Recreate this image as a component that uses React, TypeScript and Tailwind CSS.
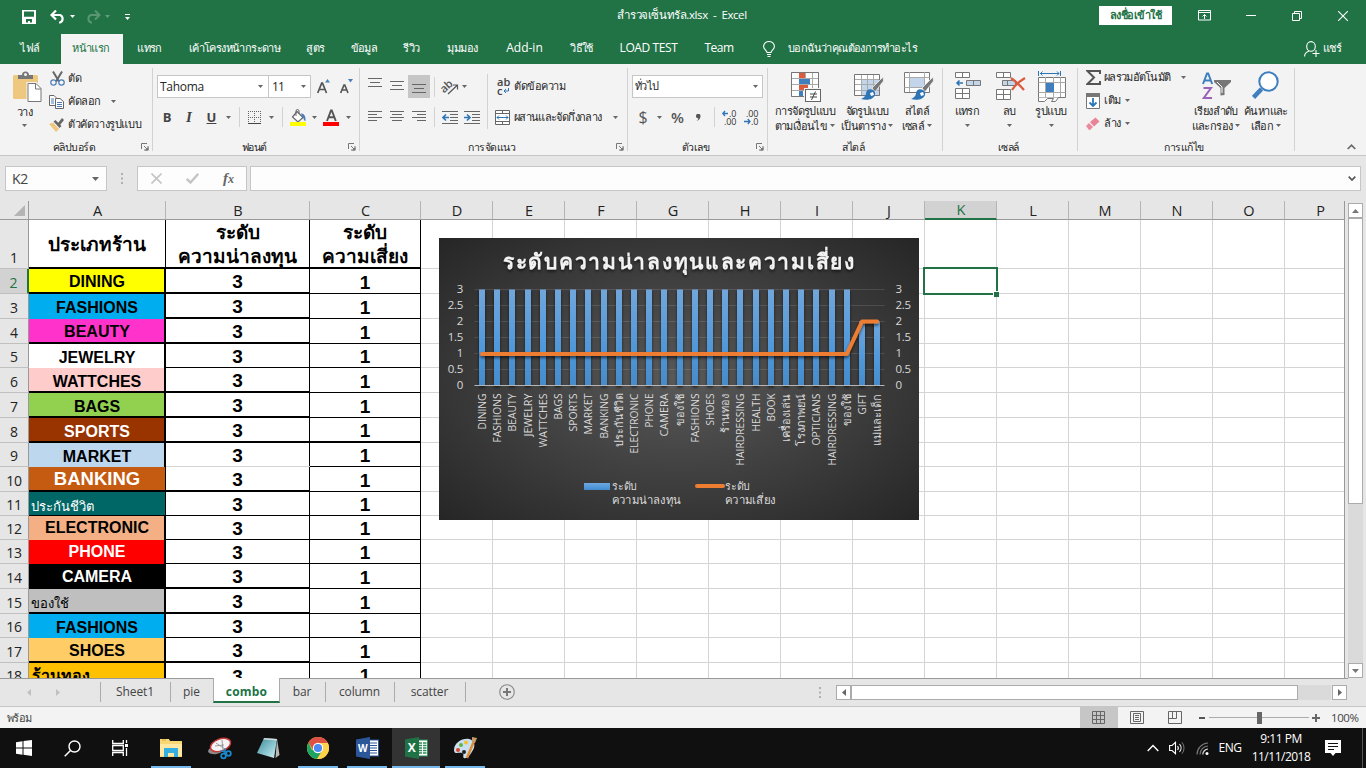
import React from "react";

function Caret({ className = "", color = "#666" }: { className?: string; color?: string }) {
  return (
    <svg className={`h-[3px] w-[5px] shrink-0 ${className}`} viewBox="0 0 5 3">
      <path d="M0 0h5L2.5 3z" fill={color} />
    </svg>
  );
}

function Launcher() {
  return (
    <svg className="mr-[4px] h-[8px] w-[8px]" viewBox="0 0 8 8">
      <path d="M.5 6V.5H6M3 3l3 3M7 3v4H3" fill="none" stroke="#777" />
      <path d="M7.5 4v3.5H4z" fill="#777" />
    </svg>
  );
}

/* ---------- title bar ---------- */

function TitleBar() {
  return (
    <div className="flex h-[34px] items-start text-white">
      <div className="flex h-[33px] w-[480px] items-center">
        <svg className="ml-[22px] h-[14px] w-[14px]" viewBox="0 0 14 14">
          <path d="M0 0h14v14H0zM2 1.6v5.2h10V1.6zM4 9v3.5h2V11h2v1.5h2V9z" fill="#fff" fillRule="evenodd" />
        </svg>
        <svg className="ml-[14px] h-[14px] w-[16px]" viewBox="0 0 16 14">
          <path d="M2 5h8a4 4 0 0 1 0 7.500h-1" fill="none" stroke="#fff" strokeWidth="2.200" />
          <path d="M6 .5L1.500 5L6 9.500" fill="none" stroke="#fff" strokeWidth="2.200" />
        </svg>
        <Caret className="ml-[4px]" color="#fff" />
        <svg className="ml-[10px] h-[14px] w-[16px] opacity-25" viewBox="0 0 16 14">
          <path d="M14 5H6a4 4 0 0 0 0 7.500h1" fill="none" stroke="#fff" strokeWidth="2" />
          <path d="M10 .5L14.500 5L10 9.500" fill="none" stroke="#fff" strokeWidth="2" />
        </svg>
        <Caret className="ml-[4px] opacity-30" color="#fff" />
        <svg className="ml-[15px] h-[6px] w-[5px]" viewBox="0 0 5 6">
          <path d="M0 0h5v1H0zM0 3h5L2.500 6z" fill="#fff" />
        </svg>
      </div>
      <div className="flex h-[30px] w-[404px] items-center justify-center text-[11.5px] tracking-[-0.4px] whitespace-pre">สำรวจเซ็นทรัล.xlsx  -  Excel</div>
      <div className="flex h-[31px] grow items-center">
        <div className="ml-[215px] flex h-[19px] w-[73px] items-center justify-center bg-white text-[11px] font-semibold tracking-[-0.5px] text-[#217346]">ลงชื่อเข้าใช้</div>
        <svg className="ml-[26px] h-[11px] w-[13px]" viewBox="0 0 13 11">
          <path d="M.5.5h12v9.500H.5zM.5 2.500h12M6.500 9V4.500M4.500 6.500l2-2l2 2" fill="none" stroke="#fff" />
        </svg>
        <div className="ml-[35px] h-px w-[10px] bg-white" />
        <svg className="ml-[36px] h-[10px] w-[10px]" viewBox="0 0 10 10">
          <path d="M.5 2.500h7v7h-7zM2.500 2.500v-2h7v7h-2" fill="none" stroke="#fff" />
        </svg>
        <svg className="ml-[36px] h-[10px] w-[10px]" viewBox="0 0 10 10">
          <path d="M0 0L10 10M10 0L0 10" fill="none" stroke="#fff" strokeWidth="1.100" />
        </svg>
      </div>
    </div>
  );
}

function Tab({ className, children }: { className: string; children: React.ReactNode }) {
  return <div className={`flex h-[28px] shrink-0 items-center justify-center whitespace-nowrap ${className}`}>{children}</div>;
}

function TabRow() {
  return (
    <div className="flex h-[30px] text-[11px] tracking-[-0.6px] text-white">
      <Tab className="w-[60px]">ไฟล์</Tab>
      <div className="ml-px flex h-[30px] w-[62px] items-center justify-center bg-[#f3f3f3] pr-[2px] pb-[2px] text-[#217346]">หน้าแรก</div>
      <Tab className="w-[53px]">แทรก</Tab>
      <Tab className="w-[117px]">เค้าโครงหน้ากระดาษ</Tab>
      <Tab className="w-[45px]">สูตร</Tab>
      <Tab className="w-[52px]">ข้อมูล</Tab>
      <Tab className="w-[43px]">รีวิว</Tab>
      <Tab className="w-[59px]">มุมมอง</Tab>
      <Tab className="w-[65px] text-[12px] tracking-normal">Add-in</Tab>
      <Tab className="w-[49px]">วิธีใช้</Tab>
      <Tab className="w-[85px] text-[12px] tracking-[-0.4px]">LOAD TEST</Tab>
      <Tab className="w-[56px] text-[12px] tracking-[-0.5px]">Team</Tab>
      <svg className="mt-[7px] ml-[16px] h-[16px] w-[12px]" viewBox="0 0 12 16">
        <path d="M4 11.500c0-2-3.400-3-3.400-6a5.400 5 0 0 1 10.800 0c0 3-3.400 4-3.400 6zM4 13.500h4M4.500 15.500h3" fill="none" stroke="#fff" strokeWidth="1.100" />
      </svg>
      <Tab className="ml-[12px] w-[131px]">บอกฉันว่าคุณต้องการทำอะไร</Tab>
      <svg className="mt-[7px] ml-[386px] h-[16px] w-[16px]" viewBox="0 0 16 16">
        <path d="M7 .6a4.300 4.800 0 0 1 0 9.600a4.300 4.800 0 0 1 0-9.600M.6 15.500c0-3 1.500-4.500 4-5.300M8.500 12.500h7M12 9v7" fill="none" stroke="#fff" strokeWidth="1.100" />
      </svg>
      <Tab className="ml-[3px] w-[18px]">แชร์</Tab>
    </div>
  );
}

/* ---------- ribbon ---------- */

function Group({ className, label, launcher, children }: { className: string; label: string; launcher?: boolean; children: React.ReactNode }) {
  return (
    <div className={`flex h-[91px] shrink-0 ${className}`}>
      <div className="flex min-w-0 grow flex-col">
        <div className="h-[75px]">{children}</div>
        <div className="flex h-[16px] items-center">
          <div className="w-[10px]" />
          <div className="grow text-center text-[10.5px] leading-none tracking-[-0.5px] whitespace-nowrap">{label}</div>
          <div className="w-[14px] pl-[3px]">{launcher && <Launcher />}</div>
        </div>
      </div>
      <div className="mt-[4px] h-[83px] w-px shrink-0 bg-[#d2d2d2]" />
    </div>
  );
}

function Lines({ rows, className }: { rows: [number, number][]; className: string }) {
  return (
    <svg className={`h-[14px] w-[14px] shrink-0 ${className}`} viewBox="0 0 14 14">
      {rows.map(([x, w], i) => (
        <rect key={i} x={x} y={i * (rows.length === 3 ? 4 : 3) + 1} width={w} height="1" fill="#666" />
      ))}
    </svg>
  );
}

function ClipboardGroup() {
  return (
    <Group className="w-[153px]" label="คลิปบอร์ด" launcher>
      <div className="flex h-full">
        <div className="flex w-[49px] flex-col items-center">
          <svg className="mt-[7px] ml-[5px] h-[32px] w-[29px]" viewBox="0 0 29 32">
            <rect x="0" y="4" width="25" height="24" rx="1.500" fill="#edc87e" />
            <path d="M5 8V4h4a3.500 3.500 0 0 1 7 0h4v4z" fill="#777" />
            <circle cx="12.500" cy="3.500" r="1.500" fill="#f3f3f3" />
            <path d="M13.500 11h10l6 6v15h-16z" fill="#f3f3f3" />
            <path d="M15 12.500h8l5 5V30.500H15z" fill="#fff" stroke="#777" />
            <path d="M22.500 12.500v5.500h5.500" fill="none" stroke="#777" />
          </svg>
          <div className="mt-[2px] text-[11px] leading-[14px] tracking-[-0.4px]">วาง</div>
          <Caret className="mt-[5px]" />
        </div>
        <div className="flex flex-col text-[11px] tracking-[-0.4px] whitespace-nowrap">
          <div className="mt-[3px] flex h-[23px] items-center">
            <svg className="mr-[3px] ml-[1px] h-[15px] w-[15px]" viewBox="0 0 15 15">
              <path d="M3 .5l6 10M12 .5l-6 10" stroke="#666" strokeWidth="2" />
              <circle cx="3.500" cy="11.500" r="2.700" fill="none" stroke="#4a7ebb" strokeWidth="1.200" />
              <circle cx="11.500" cy="11.500" r="2.700" fill="none" stroke="#4a7ebb" strokeWidth="1.200" />
            </svg>
            ตัด
          </div>
          <div className="flex h-[23px] items-center">
            <svg className="mr-[4px] h-[14px] w-[15px]" viewBox="0 0 15 14">
              <path d="M.5.500H5l3 3v7H.5z" fill="#fff" stroke="#666" />
              <path d="M2 4h3M2 6h3M2 8h3" stroke="#4a7ebb" />
              <path d="M6.500 3.500H11l3.500 3v7h-8z" fill="#fff" stroke="#666" />
              <path d="M8 7.500h5M8 9.500h5M8 11.500h5" stroke="#4a7ebb" />
            </svg>
            คัดลอก
            <Caret className="ml-[10px]" />
          </div>
          <div className="flex h-[23px] items-center">
            <svg className="mr-[4px] h-[14px] w-[15px]" viewBox="0 0 15 14">
              <path d="M0 6l4-1.500L10 11l-3 3z" fill="#edc87e" />
              <path d="M4.500 3.500l2-1.500l6 6l-2 2zM9 5l4-5l2 2l-4 5z" fill="#666" />
            </svg>
            ตัวคัดวางรูปแบบ
          </div>
        </div>
      </div>
    </Group>
  );
}

function FontGroup() {
  return (
    <Group className="w-[207px]" label="ฟอนต์" launcher>
      <div className="mt-[11px] flex h-[23px] items-center text-[12px]">
        <div className="ml-[4px] flex h-[23px] w-[112px] items-center justify-between border border-[#c6c6c6] bg-white pr-[5px] pl-[2px] tracking-[-0.3px]">
          Tahoma
          <Caret />
        </div>
        <div className="-ml-px flex h-[23px] w-[43px] items-center justify-between border border-[#c6c6c6] bg-white pr-[4px] pl-[3px] tracking-[-0.8px]">
          11
          <Caret />
        </div>
        <svg className="ml-[6px] h-[15px] w-[14px]" viewBox="0 0 14 15">
          <path d="M.7 14L4.700 4.200h.8L9.500 14M2.200 10.500h5.800" fill="none" stroke="#555" strokeWidth="1.700" />
          <path d="M8 3.500h5L10.500 0z" fill="#4a7ebb" />
        </svg>
        <svg className="ml-[9px] h-[15px] w-[14px]" viewBox="0 0 14 15">
          <path d="M.7 14L4 6h.8L8 14M2 11h5" fill="none" stroke="#555" strokeWidth="1.600" />
          <path d="M8 0h5L10.500 3.500z" fill="#4a7ebb" />
        </svg>
      </div>
      <div className="mt-[8px] flex h-[22px] items-center text-[13px] leading-none text-[#444]">
        <div className="ml-[9px] w-[10px] text-center font-bold">B</div>
        <div className="ml-[12px] w-[10px] text-center font-['Liberation_Serif',serif] text-[15px] font-bold italic">I</div>
        <div className="ml-[12px] w-[11px] text-center font-bold underline">U</div>
        <Caret className="ml-[9px]" />
        <div className="ml-[8px] h-[20px] w-px bg-[#d2d2d2]" />
        <svg className="ml-[8px] h-[13px] w-[13px]" viewBox="0 0 13 13">
          <path d="M.5 0v13M12.500 0v13M6.500 0v13M0 .5h13M0 6.500h13" stroke="#666" strokeDasharray="1 1" />
          <path d="M0 12.500h13" stroke="#444" />
        </svg>
        <Caret className="ml-[8px]" />
        <div className="ml-[8px] h-[20px] w-px bg-[#d2d2d2]" />
        <svg className="ml-[7px] h-[17px] w-[17px]" viewBox="0 0 17 17">
          <path d="M7 2.500l6 6l-5 4.500L2.500 8z" fill="#fff" stroke="#666" strokeWidth="1.200" />
          <path d="M6 7V2a1.500 1.500 0 0 1 3 0v3" fill="none" stroke="#666" />
          <path d="M11 4.500c3 0 5 2.500 4.500 7.500c-2 0-1.500-3-3-4z" fill="#4a7ebb" />
          <rect y="13" width="16" height="4" fill="#ff0" />
        </svg>
        <Caret className="ml-[5px]" />
        <svg className="ml-[6px] h-[17px] w-[17px]" viewBox="0 0 17 17">
          <path d="M4 12L8 1.500h.8L12.800 12M5.500 8.200h6" fill="none" stroke="#555" strokeWidth="1.900" />
          <rect y="13" width="16" height="4" fill="#f00" />
        </svg>
        <Caret className="ml-[6px]" />
      </div>
    </Group>
  );
}

function Indent({ out, className }: { out?: boolean; className: string }) {
  return (
    <svg className={`h-[14px] w-[16px] ${className}`} viewBox="0 0 16 14">
      <path d="M0 1.500h16M8 4.500h8M8 7.500h8M8 10.500h8M0 13.500h16" stroke="#666" />
      {out ? (
        <path d="M7 7.500H1.500M4 4.500L1 7.500l3 3" fill="none" stroke="#2e75b6" strokeWidth="1.600" />
      ) : (
        <path d="M0 7.500h5.500M3 4.500l3 3l-3 3" fill="none" stroke="#2e75b6" strokeWidth="1.600" />
      )}
    </svg>
  );
}

function AlignGroup() {
  return (
    <Group className="w-[268px]" label="การจัดแนว" launcher>
      <div className="flex">
        <div className="w-[127px]">
          <div className="mt-[11px] flex h-[23px] items-center">
            <Lines className="-mt-[6px] ml-[8px]" rows={[[0, 14], [2, 10], [0, 14]]} />
            <Lines className="mt-[1px] ml-[8px]" rows={[[0, 14], [2, 10], [0, 14]]} />
            <div className="ml-[4px] flex h-[23px] w-[22px] items-end bg-[#c6c6c6]">
              <Lines className="mb-[1px] ml-[4px]" rows={[[0, 14], [2, 10], [0, 14]]} />
            </div>
            <div className="ml-[4px] h-[20px] w-px bg-[#d2d2d2]" />
            <svg className="ml-[7px] h-[16px] w-[16px] overflow-visible" viewBox="0 0 16 16">
              <text x="-1" y="11" fontSize="11" fontWeight="600" fill="#555" transform="rotate(-42 5 9)">ab</text>
              <path d="M6 15L15 6.500M11 6h4.500v4.500" fill="none" stroke="#555" strokeWidth="1.200" />
            </svg>
            <Caret className="ml-[4px]" />
          </div>
          <div className="mt-[8px] flex h-[22px] items-center">
            <Lines className="ml-[8px]" rows={[[0, 14], [0, 9], [0, 14], [0, 9]]} />
            <Lines className="ml-[8px]" rows={[[0, 14], [2, 10], [0, 14], [2, 10]]} />
            <Lines className="ml-[8px]" rows={[[0, 14], [5, 9], [0, 14], [5, 9]]} />
            <div className="ml-[8px] h-[20px] w-px bg-[#d2d2d2]" />
            <Indent out className="ml-[7px]" />
            <Indent className="ml-[6px]" />
          </div>
        </div>
        <div className="mt-[10px] h-[55px] w-px bg-[#d2d2d2]" />
        <div className="text-[11px] tracking-[-0.5px] whitespace-nowrap">
          <div className="mt-[11px] flex h-[23px] items-center">
            <svg className="mr-[4px] ml-[9px] h-[16px] w-[13px] overflow-visible" viewBox="0 0 13 16">
              <text x="0" y="7" fontSize="11" fontWeight="600" letterSpacing="0" fill="#444">ab</text>
              <text x="0" y="15.500" fontSize="11" fontWeight="600" fill="#444">c</text>
              <path d="M11.500 9v3H7.500M9 10l-2 2l2 2" fill="none" stroke="#2e75b6" />
            </svg>
            ตัดข้อความ
          </div>
          <div className="mt-[8px] flex h-[22px] items-center">
            <svg className="mr-[4px] ml-[7px] h-[15px] w-[15px]" viewBox="0 0 15 15">
              <path d="M.5.5h14v14H.5zM.5 3.500h14M.5 11.500h14M7.500 0v3.500M7.500 11.500V15" fill="#fff" stroke="#666" />
              <path d="M2 7.500h11M4 5.500l-2 2l2 2M11 5.500l2 2l-2 2" fill="none" stroke="#2e75b6" />
            </svg>
            <div className="w-[89px] tracking-[-0.65px]">ผสานและจัดกึ่งกลาง</div>
            <Caret className="ml-[10px]" />
          </div>
        </div>
      </div>
    </Group>
  );
}

function NumberGroup() {
  return (
    <Group className="w-[140px]" label="ตัวเลข" launcher>
      <div className="mt-[11px] ml-[4px] flex h-[23px] w-[131px] items-center justify-between border border-[#c6c6c6] bg-white pr-[4px] pl-[2px] text-[11px] tracking-[-0.7px]">
        ทั่วไป
        <Caret />
      </div>
      <div className="mt-[8px] flex h-[22px] items-center text-[16px] leading-none text-[#555]">
        <div className="ml-[10px] w-[10px] text-center">$</div>
        <Caret className="ml-[9px]" />
        <div className="ml-[8px] w-[15px] text-center text-[15px] font-semibold">%</div>
        <svg className="ml-[11px] h-[7px] w-[5px]" viewBox="0 0 5 7"><path d="M0 2a2 2 0 1 1 4.500 0C4.500 4.500 3 6.500.5 7C2 6 2.500 5 2.300 4.200A2 2 0 0 1 0 2z" fill="#555" /></svg>
        <div className="ml-[13px] h-[20px] w-px bg-[#d2d2d2]" />
        <svg className="ml-[7px] h-[15px] w-[15px] overflow-visible" viewBox="0 0 15 15">
          <path d="M6 3.500H.8M3 1L.8 3.500L3 6" fill="none" stroke="#2e75b6" strokeWidth="1.300" />
          <text x="7" y="6.500" fontSize="9" fill="#333" textLength="7.500">.0</text>
          <text x="2" y="14.500" fontSize="9" fill="#333" textLength="12.500">.00</text>
        </svg>
        <svg className="ml-[7px] h-[15px] w-[15px] overflow-visible" viewBox="0 0 15 15">
          <path d="M0 11.500h6M3.800 9L6 11.500L3.800 14" fill="none" stroke="#2e75b6" strokeWidth="1.300" />
          <text x="2" y="6.500" fontSize="9" fill="#333" textLength="12.500">.00</text>
          <text x="7" y="14.500" fontSize="9" fill="#333" textLength="7.500">.0</text>
        </svg>
      </div>
    </Group>
  );
}

function BigButton({ className, icon, first, second }: { className: string; icon: React.ReactNode; first: string; second?: string }) {
  return (
    <div className={`flex shrink-0 flex-col items-center text-[11px] leading-[15px] tracking-[-0.6px] whitespace-nowrap ${className}`}>
      <div className="mt-[7px] flex h-[32px] items-start">{icon}</div>
      <div className="flex">{first}</div>
      <div className="flex h-[15px] items-center">
        {second}
        <Caret className={second ? "ml-[3px]" : ""} />
      </div>
    </div>
  );
}

function Brush() {
  return (
    <g>
      <path d="M29 6L18 17l3 4L29.500 10z" fill="#777" stroke="#f3f3f3" strokeWidth=".8" />
      <path d="M19 19c-4-2-7 0-7 4c-1 3-3 4-5 5c5 1.500 12 1 14-4c.5-2 0-4-2-5z" fill="#2e75b6" />
      <path d="M16 22l3-1l1 3l-3 1z" fill="#fff" />
    </g>
  );
}

function StylesGroup() {
  return (
    <Group className="w-[175px]" label="สไตล์">
      <div className="flex">
        <BigButton
          className="ml-[2px] w-[70px]"
          first="การจัดรูปแบบ"
          second="ตามเงื่อนไข"
          icon={
            <svg className="ml-[2px] h-[31px] w-[30px]" viewBox="0 0 30 31">
              <path d="M.5 1.500h27v24H.5zM.5 7.500h27M.5 13.500h27M.5 19.500h27M8.500 1v24M14.500 1v24M21.500 1v24" fill="#fff" stroke="#aaa" />
              <path d="M.5 1.500h27v24H.5z" fill="none" stroke="#777" />
              <path d="M8 2h6v5H8zM8 14h9v5H8z" fill="#dc5b3c" />
              <path d="M8 8h11v5H8zM8 20h4v5H8z" fill="#3f7fbf" />
              <rect x="13" y="17" width="17" height="14" fill="#f3f3f3" />
              <rect x="14.500" y="18.500" width="15" height="12" fill="#fff" stroke="#666" />
              <path d="M19 23h7M19 26h7M24.500 20.500l-4 8.500" stroke="#444" />
            </svg>
          }
        />
        <BigButton
          className="w-[54px]"
          first="จัดรูปแบบ"
          second="เป็นตาราง"
          icon={
            <svg className="ml-[4px] h-[31px] w-[30px]" viewBox="0 0 30 31">
              <path d="M.5 3.500h25v21H.5z" fill="#fff" />
              <path d="M7 9h19v16H7z" fill="#c3d5eb" />
              <path d="M.5 8.500h25M.5 13.500h25M.5 19.500h25M7.500 3v21M13.500 3v21M19.500 3v21" stroke="#aaa" />
              <path d="M.5 3.500h25v21H.5z" fill="none" stroke="#777" />
              <Brush />
            </svg>
          }
        />
        <BigButton
          className="w-[46px]"
          first="สไตล์"
          second="เซลล์"
          icon={
            <svg className="ml-[4px] h-[31px] w-[30px]" viewBox="0 0 30 31">
              <path d="M.5 1.500h25v20H.5z" fill="#fff" stroke="#777" />
              <path d="M.5 6.500h25M.5 16.500h25M5.500 1v20M20.500 1v20" stroke="#aaa" />
              <path d="M6 7h14v9H6z" fill="#c3d5eb" />
              <Brush />
            </svg>
          }
        />
      </div>
    </Group>
  );
}

function CellsGroup() {
  return (
    <Group className="w-[135px]" label="เซลล์">
      <div className="flex">
        <BigButton
          className="ml-[3px] w-[42px]"
          first="แทรก"
          icon={
            <svg className="ml-[2px] h-[31px] w-[27px]" viewBox="0 0 27 31">
              <path d="M.5 1.500h14v5H.5zM7.500 1.500v5M.5 17.500h14v10H.5zM.5 22.500h14M7.500 17.500v10" fill="#fff" stroke="#777" />
              <path d="M11.500 9.500h14v5h-14zM18.500 9.500v5" fill="#c3d5eb" stroke="#777" />
              <path d="M8 12H2M4.500 9.500L2 12l2.500 2.500" fill="none" stroke="#2e75b6" strokeWidth="1.600" />
            </svg>
          }
        />
        <BigButton
          className="w-[42px]"
          first="ลบ"
          icon={
            <svg className="ml-[4px] h-[31px] w-[30px]" viewBox="0 0 30 31">
              <path d="M.5 1.500h14v5H.5zM7.500 1.500v5M.5 18.500h14v10H.5zM.5 23.500h14M7.500 18.500v10" fill="#fff" stroke="#777" />
              <path d="M6.500 9.500h13v5h-13zM11.500 9.500v5" fill="#c3d5eb" stroke="#777" />
              <path d="M15 7c4 3 9 7 13 12M29 7c-5 3-10 7-13 12" fill="none" stroke="#dc5b3c" strokeWidth="2.200" />
            </svg>
          }
        />
        <BigButton
          className="w-[42px]"
          first="รูปแบบ"
          icon={
            <svg className="ml-[2px] h-[31px] w-[28px]" viewBox="0 0 28 31">
              <path d="M.5 0v5M22.500 0v5M2 2.500h19M4.500.5l-2 2l2 2M19 .5l2 2l-2 2" fill="none" stroke="#2e75b6" />
              <path d="M.5 6.500h27v20H.5z" fill="#fff" stroke="#777" />
              <path d="M.5 11.500h27M.5 21.500h27M7.500 6v20M15.500 6v20M22.500 6v20" stroke="#aaa" />
              <path d="M8 12h8v9H8z" fill="#3f7fbf" />
              <path d="M.5 26.500v4h6l3-3l6 0l-2 3l4 0l3-4" fill="#fff" stroke="#777" />
            </svg>
          }
        />
      </div>
    </Group>
  );
}

function EditGroup() {
  return (
    <Group className="w-[217px]" label="การแก้ไข">
      <div className="flex">
        <div className="w-[112px] text-[11px] tracking-[-0.5px] whitespace-nowrap">
          <div className="mt-[2px] flex h-[23px] items-center">
            <svg className="mr-[3px] ml-[8px] h-[15px] w-[15px] shrink-0" viewBox="0 0 15 15">
              <path d="M14 4V1H1.500L8 7.500L1.500 14H14v-3" fill="none" stroke="#555" strokeWidth="2" />
            </svg>
            <div className="w-[68px] tracking-[-0.7px]">ผลรวมอัตโนมัติ</div>
            <Caret className="ml-[9px]" />
          </div>
          <div className="flex h-[23px] items-center">
            <svg className="mr-[4px] ml-[8px] h-[16px] w-[14px]" viewBox="0 0 14 16">
              <path d="M.5.500h13v15H.5z" fill="#fff" stroke="#777" />
              <path d="M0 0h14v4H0z" fill="#777" />
              <path d="M7 5v8M3.500 9.500L7 13l3.500-3.500" fill="none" stroke="#2e75b6" strokeWidth="1.800" />
            </svg>
            เติม
            <Caret className="ml-[4px]" />
          </div>
          <div className="flex h-[23px] items-center">
            <svg className="mr-[4px] ml-[8px] h-[14px] w-[14px]" viewBox="0 0 14 14">
              <path d="M0 9l3-3l4 4l-3 3H3z" fill="#eb8a9b" />
              <path d="M4 5l5.500-4.500l4 4L8 9.500z" fill="#e98396" />
            </svg>
            ล้าง
            <Caret className="ml-[4px]" />
          </div>
        </div>
        <BigButton
          className="w-[52px]"
          first="เรียงลำดับ"
          second="และกรอง"
          icon={
            <svg className="ml-[1px] h-[29px] w-[30px]" viewBox="0 0 30 29">
              <path d="M1 13L5 2.500h1.200L10.200 13M2.500 9.500h6" fill="none" stroke="#3f7fbf" strokeWidth="2" />
              <path d="M1.500 17h7.500L1.800 27H10" fill="none" stroke="#9a62b8" strokeWidth="2" />
              <path d="M12 9h17v2l-6.500 6v7l-4 .5V17L12 11z" fill="#777" />
              <path d="M15 11l5 5v6" fill="none" stroke="#fff" />
            </svg>
          }
        />
        <BigButton
          className="w-[48px]"
          first="ค้นหาและ"
          second="เลือก"
          icon={
            <svg className="h-[29px] w-[28px]" viewBox="0 0 28 29">
              <circle cx="16.500" cy="10.500" r="9.200" fill="#fff" stroke="#3f7fbf" strokeWidth="2" />
              <path d="M9.500 18L1.500 26.500" stroke="#3f7fbf" strokeWidth="4.500" />
            </svg>
          }
        />
      </div>
    </Group>
  );
}

function Ribbon() {
  return (
    <div className="flex h-[92px] border-b border-[#c6c6c6] bg-[#f3f3f3] text-[#262626]">
      <ClipboardGroup />
      <FontGroup />
      <AlignGroup />
      <NumberGroup />
      <StylesGroup />
      <CellsGroup />
      <EditGroup />
      <svg className="mt-[80px] ml-[52px] h-[6px] w-[9px]" viewBox="0 0 9 6">
        <path d="M.7 5L4.500 1.200L8.300 5" fill="none" stroke="#666" strokeWidth="1.600" />
      </svg>
    </div>
  );
}

function FormulaBar() {
  return (
    <div className="flex h-[45px] items-start bg-[#e6e6e6] pt-[10px]">
      <div className="ml-[5px] flex h-[25px] w-[102px] items-center justify-between border border-[#c6c6c6] bg-[#fdfdfd] pr-[7px] pl-[6px] text-[14px] tracking-[-0.3px] text-[#444]">
        K2
        <svg className="h-[4px] w-[7px]" viewBox="0 0 7 4"><path d="M0 0h7L3.500 4z" fill="#666" /></svg>
      </div>
      <svg className="mt-[7px] ml-[14px] h-[11px] w-[2px]" viewBox="0 0 2 11"><path d="M0 0h2v2H0zM0 4.500h2v2H0zM0 9h2v2H0z" fill="#b0b0b0" /></svg>
      <div className="ml-[14px] flex h-[25px] w-[110px] items-center border border-[#c6c6c6] bg-[#fdfdfd]">
        <svg className="ml-[13px] h-[11px] w-[11px]" viewBox="0 0 11 11"><path d="M.5.5l10 10M10.500.5l-10 10" stroke="#c4c4c4" strokeWidth="1.600" /></svg>
        <svg className="ml-[24px] h-[11px] w-[13px]" viewBox="0 0 13 11"><path d="M.7 6L4.500 9.500L12.300.8" fill="none" stroke="#c4c4c4" strokeWidth="2.400" /></svg>
        <div className="ml-[24px] font-['Liberation_Serif',serif] text-[15px] leading-none font-bold text-[#666] italic">
          f<span className="text-[12px]">x</span>
        </div>
      </div>
      <div className="ml-[3px] flex h-[25px] w-[1111px] items-center justify-end border border-[#c6c6c6] bg-[#fdfdfd] pr-[4px]">
        <svg className="h-[5px] w-[8px]" viewBox="0 0 8 5"><path d="M.7.7L4 4L7.300.7" fill="none" stroke="#555" strokeWidth="1.700" /></svg>
      </div>
    </div>
  );
}

/* ---------- sheet ---------- */

type Edge = "none" | "grid" | "thin" | "thick";
type Row = { h: string; a: string; fill: string; font: string; right: Edge; ab: Edge; bb: Edge; cb?: Edge };

const bottom: Record<Edge, string> = {
  none: "",
  grid: "border-b border-b-[#d4d4d4]",
  thin: "border-b border-b-black",
  thick: "border-b-2 border-b-black",
};
const arial = "items-center pl-px justify-center text-[16px] font-bold font-['Liberation_Sans',sans-serif]";
const mid = `${arial} pt-[2px]`;
const low = `${arial} pt-[4px]`;
const thai = "items-end pb-[2px] pl-[2px] text-[13px]";

const rows: Row[] = [
  { h: "h-[25px]", a: "DINING", fill: "bg-[#ffff00]", font: `${arial} pt-[3px]`, right: "thick", ab: "thick", bb: "thick" },
  { h: "h-[25px]", a: "FASHIONS", fill: "bg-[#00aeef]", font: mid, right: "thick", ab: "none", bb: "thick" },
  { h: "h-[25px]", a: "BEAUTY", fill: "bg-[#ff33cc]", font: `${arial} pt-[3px]`, right: "thick", ab: "thick", bb: "thick" },
  { h: "h-[24px]", a: "JEWELRY", fill: "bg-white", font: low, right: "thick", ab: "none", bb: "thin" },
  { h: "h-[25px]", a: "WATTCHES", fill: "bg-[#ffcccc]", font: low, right: "thick", ab: "thick", bb: "thick" },
  { h: "h-[25px]", a: "BAGS", fill: "bg-[#92d050]", font: low, right: "thick", ab: "thick", bb: "thick" },
  { h: "h-[25px]", a: "SPORTS", fill: "bg-[#993300]", font: `${low} text-white`, right: "thick", ab: "thick", bb: "thick", cb: "thick" },
  { h: "h-[24px]", a: "MARKET", fill: "bg-[#bdd7ee]", font: low, right: "thick", ab: "none", bb: "grid" },
  { h: "h-[25px]", a: "BANKING", fill: "bg-[#c55a11]", font: "items-center pt-[2px] justify-center font-['Liberation_Sans',sans-serif] text-[18.5px] font-bold text-white", right: "thin", ab: "thick", bb: "thick" },
  { h: "h-[24px]", a: "ประกันชีวิต", fill: "bg-[#006666]", font: `${thai} text-white`, right: "thin", ab: "thin", bb: "thin" },
  { h: "h-[24px]", a: "ELECTRONIC", fill: "bg-[#f4b084]", font: arial, right: "thick", ab: "none", bb: "thin" },
  { h: "h-[24px]", a: "PHONE", fill: "bg-[#ff0000]", font: `${arial} text-white`, right: "thick", ab: "none", bb: "thin" },
  { h: "h-[25px]", a: "CAMERA", fill: "bg-[#000000]", font: `${mid} text-white`, right: "thick", ab: "thin", bb: "thick" },
  { h: "h-[25px]", a: "ของใช้", fill: "bg-[#bfbfbf]", font: thai, right: "thick", ab: "thick", bb: "thick" },
  { h: "h-[24px]", a: "FASHIONS", fill: "bg-[#00aeef]", font: low, right: "thick", ab: "none", bb: "thin" },
  { h: "h-[25px]", a: "SHOES", fill: "bg-[#ffcc66]", font: `${arial} pt-[3px]`, right: "thick", ab: "thick", bb: "thick" },
  { h: "h-[24px]", a: "ร้านทอง", fill: "bg-[#ffc000]", font: "items-center pl-[3px] text-[16px] font-bold", right: "thick", ab: "none", bb: "none" },
];

const rest = ["w-[72px]", "w-[72px]", "w-[72px]", "w-[72px]", "w-[72px]", "w-[72px]", "w-[72px]", "w-[72px]", "w-[72px]", "w-[72px]", "w-[72px]", "w-[72px]", "w-[59px]"];

function Blank() {
  return (
    <>
      {rest.map((w, i) => (
        <div key={i} className={`shrink-0 border-b border-[#d4d4d4] ${i < 12 ? "border-r" : ""} ${w}`} />
      ))}
    </>
  );
}

function HeadCell({ className = "border-b border-b-[#999]", width, children }: { className?: string; width: string; children: string }) {
  return <div className={`flex h-[19px] shrink-0 items-center justify-center border-r border-r-[#b5b5b5] pt-[2px] pl-px text-[14.5px] leading-none ${width} ${className}`}>{children}</div>;
}

function RowHead({ n, selected }: { n: number; selected?: boolean }) {
  return (
    <div className={`flex w-[29px] shrink-0 items-end justify-center border-b border-b-[#c0c0c0] pb-[2px] text-[14px] leading-[17px] tracking-[-0.2px] ${selected ? "border-r-2 border-r-[#217346] bg-[#d2d2d2] text-[#217346]" : "border-r border-r-[#999] bg-[#e6e6e6] text-[#222]"}`}>{n}</div>
  );
}

const digit = "flex items-center justify-center pt-[2px] font-['Liberation_Sans',sans-serif] text-[19px] leading-none font-bold";

function Sheet() {
  return (
    <div className="relative h-[477px] w-[1345px] overflow-hidden border-r border-[#999] bg-white">
      <div className="flex bg-[#e6e6e6] text-[#222]">
        <div className="flex h-[19px] w-[29px] shrink-0 items-end justify-end border-r border-b border-r-[#999] border-b-[#999] pr-[3px] pb-[3px]">
          <svg className="h-[11px] w-[11px]" viewBox="0 0 11 11"><path d="M11 0v11H0z" fill="#b4b4b4" /></svg>
        </div>
        <HeadCell width="w-[137px]">A</HeadCell>
        <HeadCell width="w-[144px]">B</HeadCell>
        <HeadCell width="w-[111px]">C</HeadCell>
        {"DEFGHIJ".split("").map((c) => <HeadCell key={c} width="w-[72px]">{c}</HeadCell>)}
        <HeadCell width="w-[72px]" className="border-b-2 border-b-[#217346] bg-[#d2d2d2] text-[#217346]">K</HeadCell>
        {"LMNO".split("").map((c) => <HeadCell key={c} width="w-[72px]">{c}</HeadCell>)}
        <div className="flex h-[19px] w-[60px] shrink-0 items-center justify-end border-b border-[#999] pt-[2px] pr-[20px] text-[14.5px] leading-none">P</div>
      </div>
      <div className="flex h-[49px] text-[19px] leading-[24px] font-bold text-black">
        <div className="flex w-[29px] shrink-0 items-end justify-center border-r border-b border-r-[#999] border-b-[#c0c0c0] bg-[#e6e6e6] pb-[2px] text-[14px] leading-[17px] font-normal text-[#222]">1</div>
        <div className="flex w-[137px] shrink-0 items-center justify-center border-r border-b-2 border-black">ประเภทร้าน</div>
        <div className="flex w-[144px] shrink-0 flex-col items-center justify-center border-r border-b-2 border-black"><div>ระดับ</div><div>ความน่าลงทุน</div></div>
        <div className="flex w-[111px] shrink-0 flex-col items-center justify-center border-r border-b-2 border-black"><div>ระดับ</div><div>ความเสี่ยง</div></div>
        <Blank />
      </div>
      {rows.map((r, i) => (
        <div key={i} className={`flex text-black ${r.h}`}>
          <RowHead n={i + 2} selected={i === 0} />
          <div className={`flex w-[137px] shrink-0 border-r-black leading-none ${r.right === "thick" ? "border-r-2" : "border-r"} ${r.fill} ${r.font} ${bottom[r.ab]}`}>{r.a}</div>
          <div className={`flex w-[144px] shrink-0 ${bottom[r.bb]}`}>
            <div className={`grow border-r border-black ${digit}`}>3</div>
          </div>
          <div className={`w-[111px] shrink-0 border-r border-r-black ${digit} ${bottom[r.cb ?? "thin"]}`}>1</div>
          <Blank />
        </div>
      ))}
      <ComboChart />
      <div className="absolute top-[66px] left-[923px] h-[28px] w-[75px] border-2 border-[#217346]" />
      <div className="absolute top-[90px] left-[993px] h-[6px] w-[6px] border-t border-l border-white bg-[#217346]" />
    </div>
  );
}

/* ---------- chart ---------- */

const categories: [string, number, number, number][] = [
  ["DINING", 3, 1, 36], ["FASHIONS", 3, 1, 49], ["BEAUTY", 3, 1, 38], ["JEWELRY", 3, 1, 43], ["WATTCHES", 3, 1, 54],
  ["BAGS", 3, 1, 26], ["SPORTS", 3, 1, 38], ["MARKET", 3, 1, 41], ["BANKING", 3, 1, 45], ["ประกันชีวิต", 3, 1, 53],
  ["ELECTRONIC", 3, 1, 60], ["PHONE", 3, 1, 34], ["CAMERA", 3, 1, 43], ["ของใช้", 3, 1, 32], ["FASHIONS", 3, 1, 49],
  ["SHOES", 3, 1, 32], ["ร้านทอง", 3, 1, 39], ["HAIRDRESSING", 3, 1, 72], ["HEALTH", 3, 1, 38], ["BOOK", 3, 1, 28],
  ["เครื่องเล่น", 3, 1, 48], ["โรงภาพยน์", 3, 1, 52], ["OPTICIANS", 3, 1, 52], ["HAIRDRESSING", 3, 1, 72],
  ["ของใช้", 3, 1, 32], ["GIFT", 2, 2, 21], ["แม่และเด็ก", 2, 2, 52],
];
const ticks = [0, 0.5, 1, 1.5, 2, 2.5, 3];
const cx = (i: number) => 43 + i * 15.2;
const cy = (v: number) => 147.5 - v * 32;

function ComboChart() {
  return (
    <svg className="absolute top-[37px] left-[439px] h-[282px] w-[480px]" viewBox="0 0 480 282" fill="#d9d9d9">
      <defs>
        <radialGradient id="back" cx=".5" cy=".5" r=".7">
          <stop offset="0" stopColor="#595959" />
          <stop offset="1" stopColor="#262626" />
        </radialGradient>
        <linearGradient id="bar" x1="0" y1="0" x2="0" y2="1">
          <stop offset="0" stopColor="#71a6db" />
          <stop offset=".6" stopColor="#5098da" />
          <stop offset="1" stopColor="#458bca" />
        </linearGradient>
        <filter id="shade" x="-10%" y="-30%" width="120%" height="160%">
          <feDropShadow dx="0" dy="2" stdDeviation="1.500" floodColor="#000" floodOpacity=".6" />
        </filter>
      </defs>
      <rect width="480" height="282" fill="url(#back)" />
      <text x="64" y="31" fontSize="21" fontWeight="700" fill="#f2f2f2" textLength="351" filter="url(#shade)">ระดับความน่าลงทุนและความเสี่ยง</text>
      {ticks.slice(1).map((t) => <path key={t} d={`M35.500 ${cy(t)}H445.500`} stroke="#fff" strokeOpacity=".12" />)}
      <g filter="url(#shade)">
        {categories.map(([, v], i) => <rect key={i} x={Math.round(cx(i)) - 3} y={cy(v)} width="6" height={v * 32} fill="url(#bar)" />)}
      </g>
      <path d="M35.500 147.500H445.500" stroke="#b5b5b5" />
      <polyline points={categories.map(([, , v], i) => `${cx(i)},${cy(v) + (v === 2 ? 0 : 0.5)}`).join(" ")} fill="none" stroke="#ed7d31" strokeWidth="4" strokeLinecap="round" strokeLinejoin="round" filter="url(#shade)" />
      {ticks.map((t) => (
        <g key={t} fontSize="11.500" letterSpacing="-.3">
          <text x="24" y={cy(t) + 3.5} textAnchor="end">{t}</text>
          <text x="456.500" y={cy(t) + 3.5}>{t}</text>
        </g>
      ))}
      {categories.map(([name, , , len], i) => (
        <text key={i} fontSize="11" textAnchor="end" textLength={len} lengthAdjust="spacingAndGlyphs" transform={`translate(${Math.round(cx(i)) + 4} 155.500) rotate(-90)`}>{name}</text>
      ))}
      <rect x="145" y="245" width="26" height="7" fill="url(#bar)" />
      <text x="173" y="252" fontSize="11" textLength="25" lengthAdjust="spacingAndGlyphs">ระดับ</text>
      <text x="173" y="266" fontSize="11" textLength="69" lengthAdjust="spacingAndGlyphs">ความน่าลงทุน</text>
      <path d="M258 248h26" stroke="#ed7d31" strokeWidth="4" strokeLinecap="round" />
      <text x="286" y="252" fontSize="11" textLength="25" lengthAdjust="spacingAndGlyphs">ระดับ</text>
      <text x="286" y="266" fontSize="11" textLength="50" lengthAdjust="spacingAndGlyphs">ความเสี่ยง</text>
    </svg>
  );
}

function VerticalScroll() {
  return (
    <div className="ml-[3px] flex h-[477px] w-[15px] flex-col pt-[2px]">
      <div className="flex h-[15px] shrink-0 items-center justify-center border border-[#ababab] bg-white">
        <svg className="h-[4px] w-[7px]" viewBox="0 0 7 4"><path d="M3.500 0L7 4H0z" fill="#777" /></svg>
      </div>
      <div className="h-[286px] shrink-0 border border-[#ababab] bg-white" />
      <div className="grow bg-[#dadada]" />
      <div className="flex h-[15px] shrink-0 items-center justify-center border border-[#ababab] bg-white">
        <svg className="h-[4px] w-[7px]" viewBox="0 0 7 4"><path d="M0 0h7L3.500 4z" fill="#777" /></svg>
      </div>
    </div>
  );
}

/* ---------- bottom bars ---------- */

function SheetTab({ className, children }: { className: string; children: string }) {
  return <div className={`mt-[4px] flex h-[20px] shrink-0 items-center justify-center border-r border-[#ababab] pr-px leading-none tracking-[-0.1px] ${className}`}>{children}</div>;
}

function SheetTabs() {
  return (
    <div className="flex h-[28px] shrink-0 bg-[#e6e6e6] text-[12px] text-[#444]">
      <div className="flex w-[213px] shrink-0 border-t border-[#999]">
        <div className="mt-[3px] flex h-[20px] w-[101px] items-center border-r border-[#ababab]">
          <svg className="ml-[27px] h-[7px] w-[4px]" viewBox="0 0 4 7"><path d="M4 0v7L0 3.500z" fill="#c0c0c0" /></svg>
          <svg className="ml-[25px] h-[7px] w-[4px]" viewBox="0 0 4 7"><path d="M0 0v7l4-3.500z" fill="#c0c0c0" /></svg>
        </div>
        <div className="-mt-px flex">
          <SheetTab className="w-[70px]">Sheet1</SheetTab>
          <div className="mt-[4px] flex h-[20px] w-[41px] items-center justify-center leading-none">pie</div>
        </div>
      </div>
      <div className="flex h-[25px] w-[67px] shrink-0 items-center justify-center border-x border-b-2 border-x-[#ababab] border-b-[#217346] bg-white pt-[4px] leading-none font-bold tracking-[0.2px] text-[#217346]">combo</div>
      <div className="flex w-[1068px] shrink-0 border-t border-[#999]">
        <div className="-mt-px flex shrink-0">
          <SheetTab className="w-[46px]">bar</SheetTab>
          <SheetTab className="w-[69px]">column</SheetTab>
          <SheetTab className="w-[71px]">scatter</SheetTab>
        </div>
        <svg className="mt-[5px] ml-[33px] h-[16px] w-[16px] shrink-0" viewBox="0 0 16 16">
          <circle cx="8" cy="8" r="7.300" fill="none" stroke="#888" strokeWidth="1.100" />
          <path d="M8 4v8M4 8h8" stroke="#777" strokeWidth="2" />
        </svg>
        <svg className="mt-[8px] ml-[304px] h-[11px] w-[2px] shrink-0" viewBox="0 0 2 11"><path d="M0 0h2v2H0zM0 4.500h2v2H0zM0 9h2v2H0z" fill="#b0b0b0" /></svg>
        <div className="mt-[6px] ml-[15px] flex h-[15px] w-[512px] shrink-0">
          <div className="flex w-[15px] items-center justify-center border border-[#ababab] bg-white">
            <svg className="h-[7px] w-[4px]" viewBox="0 0 4 7"><path d="M4 0v7L0 3.500z" fill="#666" /></svg>
          </div>
          <div className="w-[447px] border border-[#ababab] bg-white" />
          <div className="w-[33px] bg-[#dadada]" />
          <div className="ml-px flex w-[15px] items-center justify-center border border-[#ababab] bg-white">
            <svg className="h-[7px] w-[4px]" viewBox="0 0 4 7"><path d="M0 0v7l4-3.500z" fill="#666" /></svg>
          </div>
        </div>
      </div>
    </div>
  );
}

function StatusBar() {
  return (
    <div className="flex h-[22px] shrink-0 items-center border-t border-[#c6c6c6] bg-[#f3f3f3] text-[#444]">
      <div className="ml-[7px] w-[1073px] text-[11px] leading-none tracking-[-0.6px]">พร้อม</div>
      <div className="flex h-[21px] w-[38px] items-center justify-center bg-[#c6c6c6] pr-px">
        <svg className="h-[13px] w-[13px]" viewBox="0 0 13 13"><path d="M.5.5h12v12H.5zM.5 4.500h12M.5 8.500h12M4.500.5v12M8.500.5v12" fill="none" stroke="#666" /></svg>
      </div>
      <svg className="ml-[12px] h-[13px] w-[14px]" viewBox="0 0 14 13"><path d="M.5.5h13v12H.5zM3.500 2.500h7v8h-7zM5 4.500h4M5 6.500h4M5 8.500h4" fill="none" stroke="#666" /></svg>
      <svg className="ml-[24px] h-[13px] w-[14px]" viewBox="0 0 14 13"><path d="M.5.5h13v12H.5zM4.500.5v7M8.500.5v7M.5 7.500h8" fill="none" stroke="#666" /></svg>
      <div className="ml-[17px] h-[2px] w-[6px] bg-[#555]" />
      <div className="ml-[4px] flex w-[100px] items-center">
        <div className="h-px w-[48px] bg-[#ababab]" />
        <div className="h-[12px] w-[5px] bg-[#666]" />
        <div className="h-px w-[47px] bg-[#ababab]" />
      </div>
      <svg className="ml-[3px] h-[8px] w-[8px]" viewBox="0 0 8 8"><path d="M4 0v8M0 4h8" stroke="#666" strokeWidth="2" /></svg>
      <div className="ml-[11px] text-[11.500px] tracking-[-0.4px]">100%</div>
    </div>
  );
}

function Task({ className, children }: { className: string; children: React.ReactNode }) {
  return <div className={`flex h-[40px] shrink-0 items-center justify-center border-b-2 pt-[2px] ${className}`}>{children}</div>;
}

function OfficeIcon({ letter, dark, light }: { letter: string; dark: string; light: string }) {
  return (
    <svg className="h-[22px] w-[23px]" viewBox="0 0 23 22">
      <rect x="11" y="3" width="11.500" height="16" fill="#fff" stroke={light} />
      {letter === "W" ? (
        <path d="M14 6h7M14 8.500h7M14 11h7M14 13.500h7M14 16h7" stroke={light} strokeWidth="1.200" />
      ) : (
        <path d="M14 6h3M18 6h3.500M14 8.500h3M18 8.500h3.500M14 11h3M18 11h3.500M14 13.500h3M18 13.500h3.500M14 16h3M18 16h3.500" stroke={light} strokeWidth="1.600" />
      )}
      <path d="M0 2.500L14 0v22L0 19.500z" fill={dark} />
      <text x="6.800" y="15" fontSize={letter === "W" ? 10 : 12} fontWeight="700" textAnchor="middle" fill="#fff">{letter}</text>
    </svg>
  );
}

function Taskbar() {
  return (
    <div className="flex h-[40px] shrink-0 items-center bg-[#101010] text-[12px] text-white">
      <svg className="ml-[16px] h-[16px] w-[16px]" viewBox="0 0 16 16"><path d="M0 2.200L6.500 1.300v6.300H0zM7.500 1.100L16 0v7.600H7.500zM0 8.500h6.500v6.200L0 13.800zM7.500 8.500H16V16l-8.500-1.200z" fill="#fff" /></svg>
      <svg className="ml-[32px] h-[17px] w-[17px]" viewBox="0 0 17 17"><circle cx="10.500" cy="6.500" r="5.500" fill="none" stroke="#fff" strokeWidth="1.400" /><path d="M6.500 10.500L.7 16.300" stroke="#fff" strokeWidth="1.500" /></svg>
      <svg className="ml-[31px] h-[16px] w-[17px]" viewBox="0 0 17 16"><path d="M.7 0v3.500h10.600V0M.7 5.500h10.600v5H.7zM.7 16v-3.500h10.600V16M14.500 0v3M14.500 8v8" fill="none" stroke="#fff" strokeWidth="1.300" /><path d="M13 4h3v3h-3z" fill="#fff" /></svg>
      <Task className="ml-[22px] w-[40px] border-[#76b9ed]">
        <svg className="h-[18px] w-[22px]" viewBox="0 0 22 18"><path d="M0 0h9l1 2h12v16H0z" fill="#f8d775" /><path d="M0 5h22v12H0z" fill="#ffe9a2" /><path d="M4 18V9h14v9h-4v-4H8v4z" fill="#35aee2" /><path d="M2 1h4" stroke="#d9a93c" /></svg>
      </Task>
      <Task className="ml-[9px] w-[40px] border-transparent">
        <svg className="h-[23px] w-[25px]" viewBox="0 0 25 23">
          <ellipse cx="8" cy="13" rx="8" ry="4" fill="#8b8b8b" transform="rotate(-10 8 13)" />
          <ellipse cx="12.500" cy="8" rx="10.500" ry="6" fill="#f4f4f4" stroke="#c8393b" strokeWidth="1.500" transform="rotate(-20 12.500 8)" />
          <path d="M7 9l9-1M14 3l1 10M8 6l9 6" stroke="#888" strokeWidth=".8" />
          <circle cx="15.500" cy="19" r="2.300" fill="none" stroke="#1c87c9" strokeWidth="1.800" />
          <circle cx="20.500" cy="16.500" r="2.300" fill="none" stroke="#1c87c9" strokeWidth="1.800" />
          <path d="M12.500 13.500l6 2M17 11.500v6" stroke="#1c87c9" strokeWidth="1.600" />
        </svg>
      </Task>
      <Task className="ml-[8px] w-[40px] border-transparent">
        <svg className="h-[22px] w-[23px]" viewBox="0 0 23 22">
          <defs><linearGradient id="pad" x1="0" y1="0" x2="1" y2="1"><stop offset="0" stopColor="#3c8796" /><stop offset=".6" stopColor="#8fcad4" /><stop offset="1" stopColor="#d9eff2" /></linearGradient></defs>
          <path d="M20 2l2.500 16l-4 3z" fill="#b7b9b5" />
          <path d="M7 1l13 1l-3 19L0 16z" fill="url(#pad)" />
          <path d="M7 1l13 1l0 1.500L6.500 2.500z" fill="#d5dadb" />
        </svg>
      </Task>
      <Task className="ml-[10px] w-[40px] border-[#76b9ed]">
        <svg className="h-[22px] w-[22px]" viewBox="0 0 22 22">
          <circle cx="11" cy="11" r="11" fill="#fdd149" />
          <path d="M10 22l5.500-9L5 13L1.500 5.500A11 11 0 0 0 10 22z" fill="#1da462" />
          <path d="M11 6H20.800A11 11 0 0 0 1.500 5.500L6 13z" fill="#dd5144" />
          <path d="M11 6h9.800A11 11 0 0 1 10 22l5.500-8z" fill="#fdd149" />
          <circle cx="11" cy="11" r="5.200" fill="#fff" />
          <circle cx="11" cy="11" r="4.100" fill="#4a8af4" />
        </svg>
      </Task>
      <Task className="ml-[9px] w-[40px] border-[#76b9ed]"><OfficeIcon letter="W" dark="#2b579a" light="#2b579a" /></Task>
      <Task className="ml-[5px] w-[48px] border-[#76b9ed] bg-[#333]"><OfficeIcon letter="X" dark="#1f7246" light="#2d8a57" /></Task>
      <Task className="ml-[5px] w-[40px] border-[#76b9ed]">
        <svg className="h-[24px] w-[25px]" viewBox="0 0 25 24">
          <path d="M1 14C1 7 9 2 16 3c5 1 7 6 4 11c-3 6-7 9-9 8c-2-1 1-4-2-5c-3-1-8 2-8-3z" fill="#c9dfef" />
          <circle cx="5" cy="14" r="2" fill="#d8442e" /><circle cx="8" cy="9" r="2" fill="#5fb441" /><circle cx="13" cy="6.500" r="2" fill="#f0c22e" /><circle cx="11" cy="16" r="2" fill="#222" />
          <path d="M21 5L14 22" stroke="#e08b32" strokeWidth="2.400" /><path d="M19 1l5 1l-2 5l-3-1z" fill="#c79c6b" />
        </svg>
      </Task>
      <svg className="ml-[662px] h-[8px] w-[12px]" viewBox="0 0 12 8"><path d="M.7 7L6 1.500L11.300 7" fill="none" stroke="#fff" strokeWidth="1.400" /></svg>
      <svg className="ml-[10px] h-[14px] w-[17px]" viewBox="0 0 17 14">
        <path d="M.6 4.500h2.500L6.500 1.300v11.400L3.100 9.500H.6zM8.500 5a3 3 0 0 1 0 4M10.500 3a6 6 0 0 1 0 8" fill="none" stroke="#fff" strokeWidth="1.100" />
        <path d="M13 1.300a9 9 0 0 1 0 11.400" fill="none" stroke="#777" />
      </svg>
      <svg className="ml-[10px] h-[13px] w-[13px]" viewBox="0 0 13 13">
        <path d="M1 12.500A11.500 11.500 0 0 1 12 1M4 12.500A8.500 8.500 0 0 1 12 4" fill="none" stroke="#777" strokeWidth="1.200" />
        <path d="M6.800 12.500A5.500 5.500 0 0 1 12 7" fill="none" stroke="#ddd" strokeWidth="1.200" />
        <circle cx="11" cy="11.500" r="1.500" fill="#fff" />
      </svg>
      <div className="ml-[9px] w-[24px] text-center text-[12px] tracking-[-0.5px]">ENG</div>
      <div className="ml-[8px] flex w-[62px] flex-col items-center text-[12px] leading-[18px] tracking-[-0.5px] whitespace-nowrap">
        <div>9:11 PM</div>
        <div>11/11/2018</div>
      </div>
      <svg className="ml-[13px] h-[17px] w-[16px]" viewBox="0 0 16 17"><path d="M0 0h16v13h-5.500L8 16l-2.500-3H0z" fill="#fff" /><path d="M3 3.500h10M3 6.500h10M3 9.500h6" stroke="#101010" /></svg>
      <div className="ml-[21px] h-[40px] w-px bg-[#555]" />
    </div>
  );
}

export default function App() {
  return (
    <div className="flex h-[768px] w-[1366px] flex-col overflow-hidden bg-[#e6e6e6] font-['Open_Sans','Noto_Sans',sans-serif]">
      <div className="h-[64px] shrink-0 bg-[#217346]">
        <TitleBar />
        <TabRow />
      </div>
      <Ribbon />
      <FormulaBar />
      <div className="flex h-[477px] shrink-0 items-start">
        <Sheet />
        <VerticalScroll />
      </div>
      <SheetTabs />
      <StatusBar />
      <Taskbar />
    </div>
  );
}
